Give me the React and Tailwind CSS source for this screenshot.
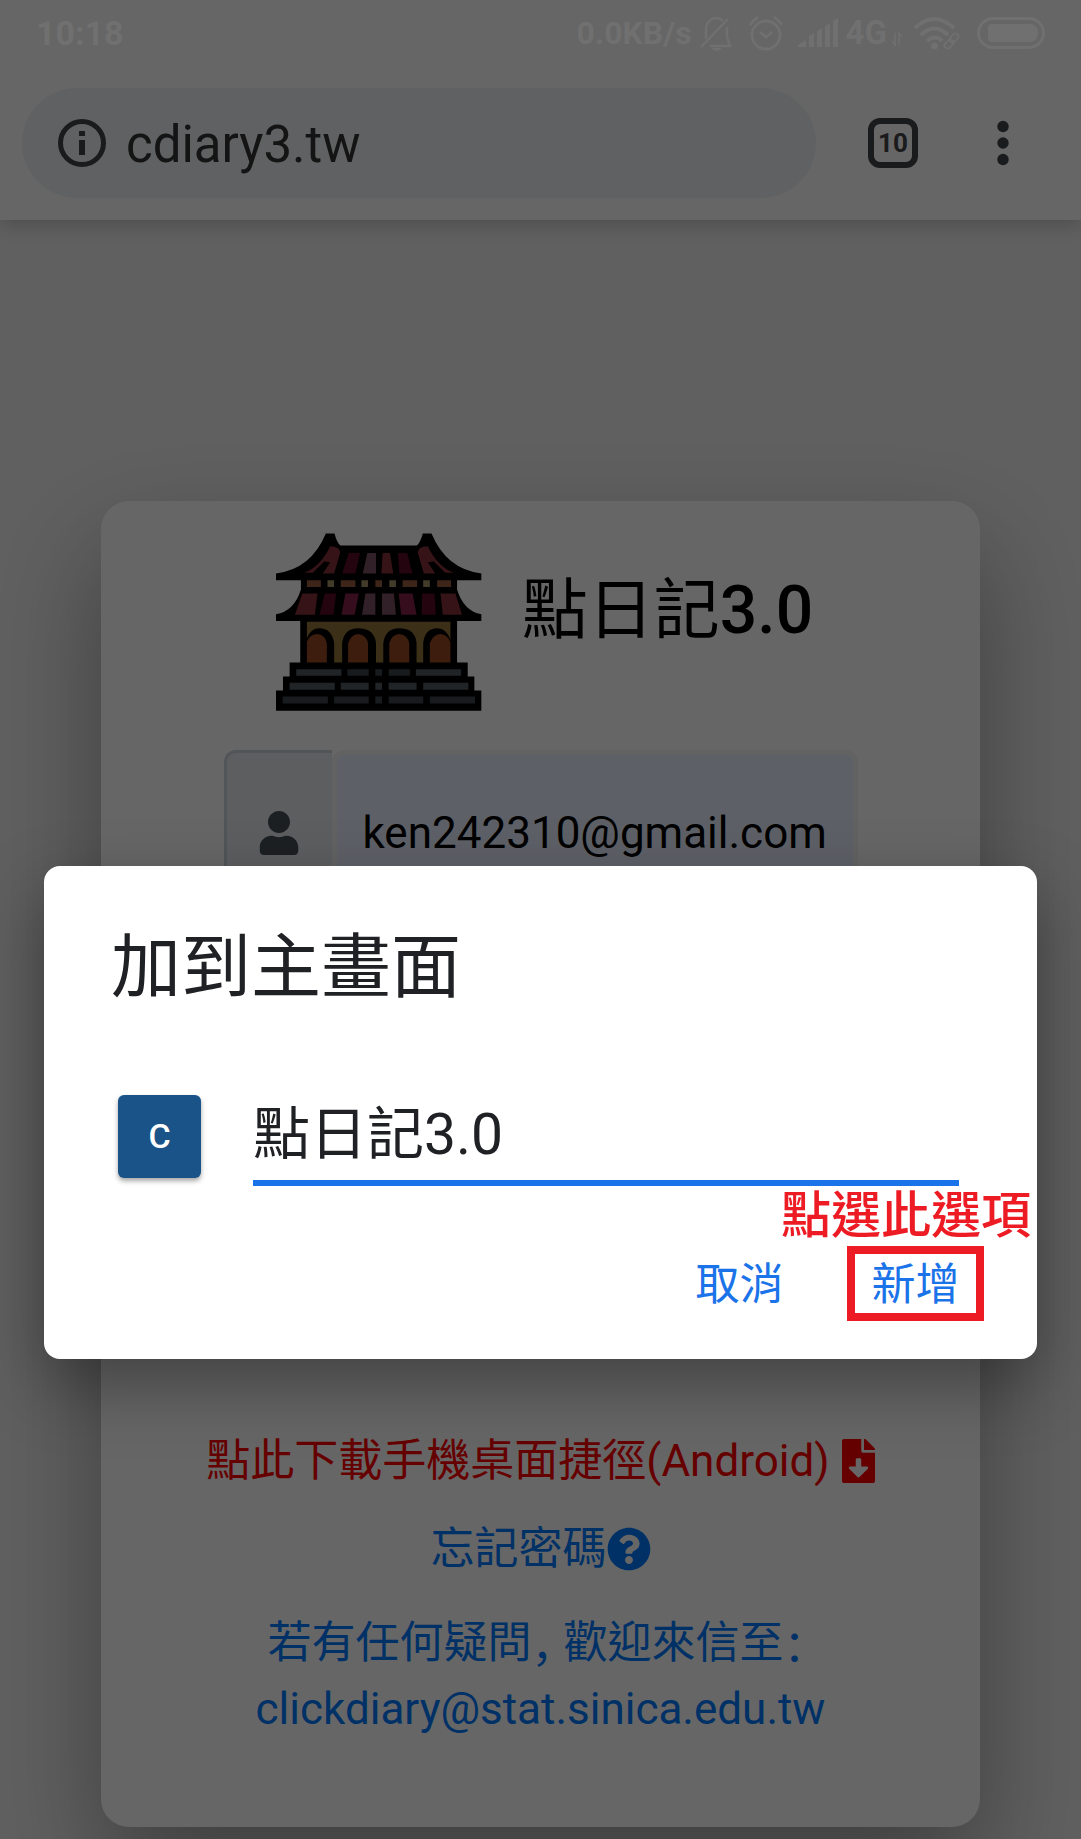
import React, { useState } from "react";
import { FaUser, FaFileDownload, FaQuestionCircle } from "react-icons/fa";

function StatusBar() {
  return (
    <div className="relative z-20 flex h-[66px] items-center pl-9 pr-9 font-bold text-[#707070]">
      <time className="text-[34px] leading-10">10:18</time>
      <div className="ml-auto flex items-center">
        <span className="text-[32px] leading-10">0.0KB/s</span>
        <svg className="ml-2 h-9 w-8" viewBox="0 0 32 36" fill="none" stroke="currentColor" strokeWidth="2.5">
          <path d="M1 32 28 4M6 24V13C7 4 17 0 23 6M27 12V22L30 31H10" />
          <path d="M11 33h11q-5 6-11 0z" fill="currentColor" stroke="none" />
        </svg>
        <svg className="ml-4 h-9 w-9" viewBox="0 0 36 36" fill="none" stroke="currentColor" strokeWidth="2.8">
          <circle cx="18" cy="20" r="14" />
          <path d="m12 17 6 5 6-5M2 10q3-5 8-8M34 10q-3-5-8-8" />
        </svg>
        <svg className="ml-3 h-8 w-11" viewBox="0 0 44 32" fill="currentColor">
          <path d="M2 30v-2l8-5v7zM13 30V19l5-3v14zM21 30V14l5-3v19zM29 30V9l5-3v24zM37 30V4l5-3v29z" />
        </svg>
        <span className="ml-1.5 text-[33px] leading-10">4G</span>
        <svg className="ml-1 mt-3 h-4 w-3" viewBox="0 0 12 16" fill="none" stroke="currentColor" strokeWidth="1.5">
          <path d="M4 2v12L1 10M8 14V2l3 4" />
        </svg>
        <svg className="ml-2.5 h-9 w-12" viewBox="0 0 48 36" fill="none" stroke="currentColor" strokeWidth="4">
          <path d="M2 13Q21-5 41 13M8 20Q21 7 35 20M14 26q8-7 15 0" />
          <circle cx="21.500" cy="31" r="3.500" fill="currentColor" stroke="none" />
          <g strokeWidth="1.800">
            <rect x="31" y="26" width="10" height="6" rx="3" transform="rotate(-45 36 29)" />
            <rect x="36" y="20" width="10" height="6" rx="3" transform="rotate(-45 41 23)" />
          </g>
        </svg>
        <div className="ml-4 h-8 w-[68px] rounded-full border-[3px] border-[#707070] py-1 pl-2 pr-1">
          <div className="h-full rounded-l-sm rounded-r-lg bg-[#707070]" />
        </div>
      </div>
    </div>
  );
}

function BrowserBar() {
  return (
    <div className="flex items-center pb-[22px] pl-[22px] pr-[72px] pt-[22px]">
      <label className="flex h-[110px] min-w-0 flex-1 items-center gap-5 rounded-full bg-[#f1f3f4] pl-9">
        <svg className="size-12 shrink-0" viewBox="0 0 48 48" fill="none" stroke="#414447" strokeWidth="5">
          <circle cx="24" cy="24" r="21.500" />
          <path d="M24 12v5M24 21v15" strokeWidth="6" />
        </svg>
        <input aria-label="網址" defaultValue="cdiary3.tw" className="w-full min-w-0 bg-transparent pt-1 text-[51px] leading-[60px] text-[#333] outline-none" />
      </label>
      <button aria-label="分頁" className="ml-[52px] flex size-[50px] items-center justify-center rounded-xl border-[6px] border-[#414447] font-[Roboto] text-[26px] font-bold leading-none text-[#414447]">
        10
      </button>
      <button aria-label="選單" className="ml-[79px] text-[#414447]">
        <svg className="h-12 w-3" viewBox="0 0 12 48" fill="currentColor">
          <circle cx="6" cy="7.500" r="5.700" />
          <circle cx="6" cy="24" r="5.700" />
          <circle cx="6" cy="40.500" r="5.700" />
        </svg>
      </button>
    </div>
  );
}

function TempleLogo() {
  return (
    <svg className="h-[180px] w-[206px]" viewBox="45 65 620 540" aria-hidden="true">
      <path d="M45 192Q150 180 195 72h26q8 30 18 36h230q10-8 18-36h26q45 108 150 120v20H590V240q20 65 73 75v20H590V460h32v42h20v42h21v61H45v-61h21v-42h20v-42h32V335H45v-20q55-10 75-75v-28H45z" fill="#000" />
      <g fill="#85303a">
        <path d="M130 190q50-20 78-80 30 0 30 20l-18 62h-34l22-34-18-2q-20 20-34 34zM580 190q-50-20-78-80-30 0-30 20l18 62h34l-22-34 18-2q20 20 34 34z" />
        <path d="M366 130h22l10 62h-36z" />
        <path d="M124 252h46l-8 64h-60zM540 252h45l20 64h-58z" />
      </g>
      <path d="M264 130h34l-14 62h-40zM412 130h28l16 62h-40zM192 252h34l-8 64h-42zM484 252h38l4 64h-42z" fill="#5a0b26" />
      <path d="M254 252h40l-12 64h-40zM414 252h42l12 64h-46z" fill="#852248" />
      <path d="M320 130h26v62h-40zM314 252h30v64h-40zM364 252h36l6 64h-42z" fill="#7b5262" />
      <g fill="#9a5f40">
        <path d="M138 212h42v21h-42zM240 212h44v21h-44zM344 212h20v21h-20zM426 212h44v21h-44zM530 212h42v21h-42z" />
      </g>
      <path d="M200 212h20v21h-20zM302 212h20v21h-20zM386 212h20v21h-20zM488 212h20v21h-20z" fill="#a8936a" />
      <path d="M138 337h432v55q-12-35-39-35-38 0-43 45v58h-20v-58q-4-45-52-45-42 0-48 45v58h-22v-58q-5-45-54-45-42 0-48 45v58h-24v-58q-7-45-45-45-25 0-37 30z" fill="#94763c" />
      <path d="M138 460v-62q8-22 30-24 26 2 30 28v58zM262 460v-58q8-26 30-28 26 4 30 28v58zM386 460v-58q6-26 30-28 26 4 30 28v58zM508 460v-58q8-26 32-28 20 2 30 24v62z" fill="#984a22" />
      <g fill="#525b63">
        <path d="M106 480h136v20H106zM466 480h136v20H466zM86 521h136v21H86zM240 521h84v21h-84zM384 521h84v21h-84zM488 521h136v21H488zM344 521h20v21h-20z" />
      </g>
      <g fill="#3d4549">
        <path d="M260 480h64v20h-64zM344 480h20v20h-20zM384 480h64v20h-64zM65 562h136v21H65zM220 562h104v21H220zM344 562h20v21h-20zM384 562h104v21H384zM508 562h136v21H508z" />
      </g>
    </svg>
  );
}

function LoginCard() {
  return (
    <main className="mx-[101px] flex flex-col items-center rounded-[28px] bg-white pb-[85px] pt-[30px] shadow-[0_50px_110px_rgba(0,0,0,0.35)]">
      <div className="flex items-center gap-10 pl-2">
        <TempleLogo />
        <h1 className="mb-5 text-[66px] leading-[80px] text-black">
          點日記<span className="font-medium">3.0</span>
        </h1>
      </div>
      <label className="mt-[39px] flex h-[166px] w-[634px] max-w-full">
        <span className="flex w-[108px] items-center justify-center rounded-l-xl border-[3px] border-r-0 border-[#ced4da] bg-[#e9ecef] text-[44px] text-[#495057]">
          <FaUser />
        </span>
        <input type="email" defaultValue="ken242310@gmail.com" className="min-w-0 flex-1 rounded-xl border-[5px] border-[#f6f6f6] bg-[#e8f0fe] pl-[26px] text-[44px] leading-[66px] text-black outline-none" />
      </label>
      <a href="#shortcut" className="mt-[512px] flex items-center gap-3 text-[44px] leading-[66px] text-[#ff0000]">
        點此下載手機桌面捷徑(Android)
        <FaFileDownload className="h-11 w-[33px]" />
      </a>
      <a href="#forgot" className="mt-[22px] flex items-center text-[44px] leading-[66px] text-[#007bff]">
        忘記密碼
        <FaQuestionCircle />
      </a>
      <a href="mailto:clickdiary@stat.sinica.edu.tw" className="mt-[28px] text-center text-[44px] leading-[66px] text-[#007bff]">
        <span className="flex justify-center">
          若有任何疑問<span className="mr-2.5 font-['Noto_Sans_CJK_SC'] [font-feature-settings:'halt']" lang="zh-CN">，</span>歡迎來信至<span className="mr-2 font-['Noto_Sans_CJK_SC'] [font-feature-settings:'halt']" lang="zh-CN">：</span>
        </span>
        clickdiary@stat.sinica.edu.tw
      </a>
    </main>
  );
}

function AddToHomeDialog() {
  const [name, setName] = useState("點日記3.0");
  return (
    <div className="absolute inset-0 z-10 bg-black/60 px-11 pt-[866px]">
      <section role="dialog" aria-labelledby="dialog-title" className="rounded-2xl bg-white pb-[38px] pt-[60px] text-[#202124] shadow-[0_26px_66px_rgba(0,0,0,0.35)]">
        <h2 id="dialog-title" className="px-[67px] text-[70px] leading-[84px]">加到主畫面</h2>
        <div className="mt-[78px] flex items-center gap-[52px] pl-[74px] pr-[78px]">
          <span className="mb-0.5 flex size-[83px] shrink-0 items-center justify-center rounded-md bg-[#1a5387] text-[34px] font-medium text-white shadow-[0_3px_5px_rgba(0,0,0,0.35)]">C</span>
          <input aria-label="名稱" value={name} onChange={(e) => setName(e.target.value)} className="h-[98px] min-w-0 flex-1 border-b-[6px] border-[#1a73e8] bg-transparent pb-2.5 text-[57px] leading-[80px] outline-none" />
        </div>
        <div className="relative mt-[60px] flex h-[75px] justify-end gap-[39px] pr-[53px] text-[44px] leading-none text-[#1a73e8]">
          <p className="absolute bottom-full right-1.5 pb-1 text-[50px] font-medium leading-[52px] text-[#ed1c24]">點選此選項</p>
          <button className="w-[137px] pt-0.5">取消</button>
          <button className="w-[137px] border-8 border-[#ed1c24] pt-0.5">新增</button>
        </div>
      </section>
    </div>
  );
}

export default function App() {
  return (
    <div className="relative min-h-screen overflow-hidden bg-[#f0f0f0] pb-3 font-[Roboto,'Noto_Sans_CJK_TC',sans-serif]">
      <header className="relative bg-white shadow-[0_4px_20px_rgba(0,0,0,0.22)]">
        <div className="h-[66px]" />
        <BrowserBar />
      </header>
      <div className="pt-[281px]">
        <LoginCard />
      </div>
      <AddToHomeDialog />
      <div className="absolute inset-x-0 top-0 z-20">
        <StatusBar />
      </div>
    </div>
  );
}
